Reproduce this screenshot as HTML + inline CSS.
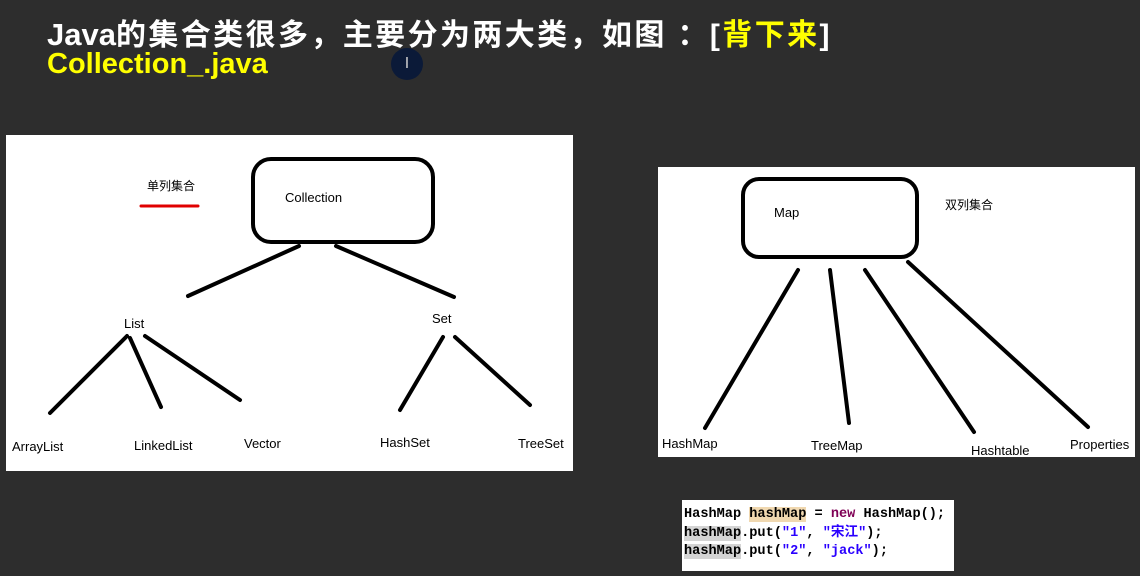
<!DOCTYPE html>
<html><head><meta charset="utf-8"><style>
body{margin:0;width:1140px;height:576px;background:#2d2d2d;overflow:hidden;position:relative;font-family:"Liberation Sans","Noto Sans CJK SC",sans-serif}
.t{position:absolute;left:47px;font-weight:bold;font-size:30px;color:#fff;white-space:nowrap}
.y{color:#ffff00}
svg{position:absolute;left:0;top:0}
.code{position:absolute;left:682px;top:500px;width:272px;height:71px;background:#fff;font-family:"Liberation Mono","Noto Sans CJK SC",monospace;font-weight:bold;font-size:13.6px;line-height:18.5px;padding:6px 0 0 2px;box-sizing:border-box;color:#000;white-space:pre}
.k{color:#7f0055}.s{color:#2a00ff}.h{background:#f0d8b0}.g{background:#d4d4d4}
</style></head><body>
<div class="t" style="top:10px;letter-spacing:2.4px"><span style="letter-spacing:0;font-size:31px">Java</span>的集合类很多，主要分为两大类，如图 ：[<span class="y">背下来</span>]</div>
<div class="t y" style="top:48px;font-size:29px">Collection_.java</div>
<div style="position:absolute;left:391px;top:48px;width:32px;height:32px;border-radius:50%;background:#0b1a38;color:#ccc;font-size:16px;text-align:center;line-height:32px">I</div>
<svg width="1140" height="576" font-family="Liberation Sans, Noto Sans CJK SC, sans-serif" font-size="13">
<rect x="6" y="135" width="567" height="336" fill="#fff"/>
<rect x="658" y="167" width="477" height="290" fill="#fff"/>
<g stroke="#000" stroke-width="4" fill="none" stroke-linecap="round">
<rect x="253" y="159" width="180" height="83" rx="18"/>
<line x1="299" y1="246" x2="188" y2="296"/>
<line x1="336" y1="246" x2="454" y2="297"/>
<line x1="127" y1="336" x2="50" y2="413"/>
<line x1="130" y1="338" x2="161" y2="407"/>
<line x1="145" y1="336" x2="240" y2="400"/>
<line x1="443" y1="337" x2="400" y2="410"/>
<line x1="455" y1="337" x2="530" y2="405"/>
<rect x="743" y="179" width="174" height="78" rx="16"/>
<line x1="798" y1="270" x2="705" y2="428"/>
<line x1="830" y1="270" x2="849" y2="423"/>
<line x1="865" y1="270" x2="974" y2="432"/>
<line x1="908" y1="262" x2="1088" y2="427"/>
</g>
<line x1="141" y1="206" x2="198" y2="206" stroke="#e00000" stroke-width="3" stroke-linecap="round"/>
<g fill="#000">
<text x="147" y="190" font-size="12">单列集合</text>
<text x="285" y="202">Collection</text>
<text x="124" y="328">List</text>
<text x="432" y="323">Set</text>
<text x="12" y="451">ArrayList</text>
<text x="134" y="450">LinkedList</text>
<text x="244" y="448">Vector</text>
<text x="380" y="447">HashSet</text>
<text x="518" y="448">TreeSet</text>
<text x="774" y="217">Map</text>
<text x="945" y="209" font-size="12">双列集合</text>
<text x="662" y="448">HashMap</text>
<text x="811" y="450">TreeMap</text>
<text x="971" y="455">Hashtable</text>
<text x="1070" y="449">Properties</text>
</g>
</svg>
<div class="code">HashMap <span class="h">hashMap</span> = <span class="k">new</span> HashMap();
<span class="g">hashMap</span>.put(<span class="s">"1"</span>, <span class="s">"宋江"</span>);
<span class="g">hashMap</span>.put(<span class="s">"2"</span>, <span class="s">"jack"</span>);</div>
</body></html>
